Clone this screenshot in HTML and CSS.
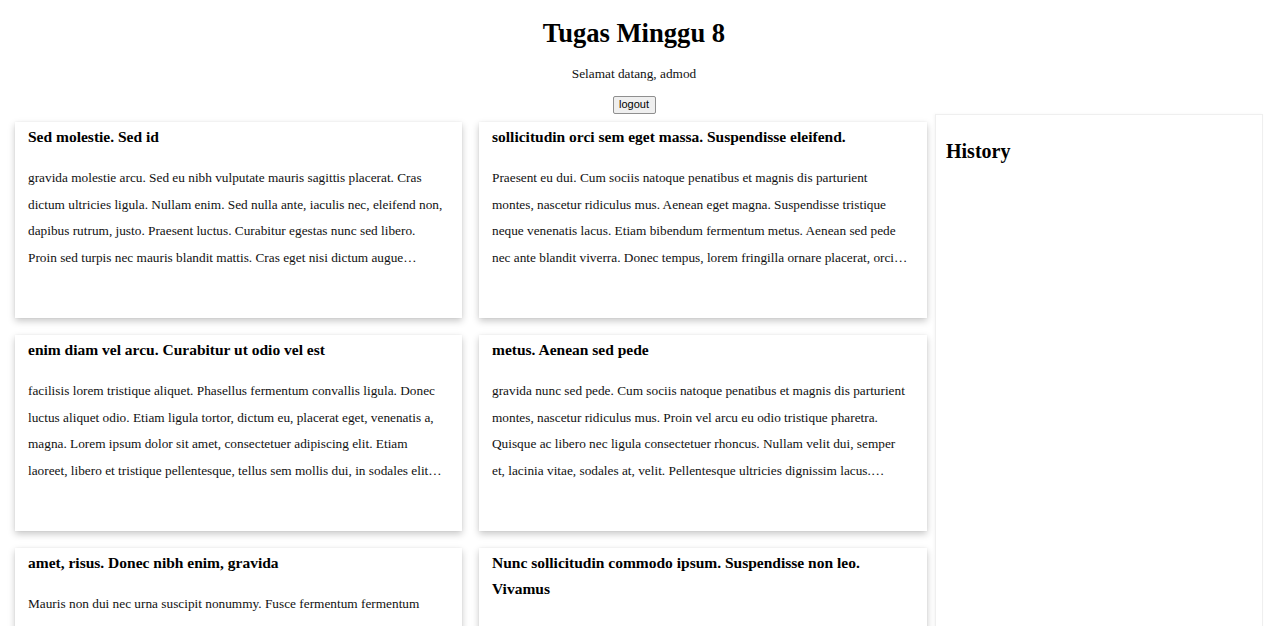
FILE: index.html
```html
<!DOCTYPE html>
<html lang="id">
<head>
<meta charset="utf-8">
<title>Tugas Minggu 8</title>
<link rel="stylesheet" href="styles.css">
</head>
<body>
<header class="header">
  <h1 class="title">Tugas Minggu 8</h1>
  <p class="welcome">Selamat datang, admod</p>
  <button class="logout" type="button">logout</button>
</header>
<main class="main">
  <section class="cards">
    <article class="card">
      <h3 class="card-title">Sed molestie. Sed id</h3>
      <p class="card-body">gravida molestie arcu. Sed eu nibh vulputate mauris sagittis placerat. Cras dictum ultricies ligula. Nullam enim. Sed nulla ante, iaculis nec, eleifend non, dapibus rutrum, justo. Praesent luctus. Curabitur egestas nunc sed libero. Proin sed turpis nec mauris blandit mattis. Cras eget nisi dictum augue malesuada malesuada. Integer id magna et ipsum cursus vestibulum.</p>
    </article>
    <article class="card">
      <h3 class="card-title">sollicitudin orci sem eget massa. Suspendisse eleifend.</h3>
      <p class="card-body">Praesent eu dui. Cum sociis natoque penatibus et magnis dis parturient montes, nascetur ridiculus mus. Aenean eget magna. Suspendisse tristique neque venenatis lacus. Etiam bibendum fermentum metus. Aenean sed pede nec ante blandit viverra. Donec tempus, lorem fringilla ornare placerat, orci lacus vestibulum lorem, sit amet ultricies sem magna nec quam.</p>
    </article>
    <article class="card">
      <h3 class="card-title">enim diam vel arcu. Curabitur ut odio vel est</h3>
      <p class="card-body">facilisis lorem tristique aliquet. Phasellus fermentum convallis ligula. Donec luctus aliquet odio. Etiam ligula tortor, dictum eu, placerat eget, venenatis a, magna. Lorem ipsum dolor sit amet, consectetuer adipiscing elit. Etiam laoreet, libero et tristique pellentesque, tellus sem mollis dui, in sodales elit erat vitae risus. Duis a mi fringilla mi lacinia mattis.</p>
    </article>
    <article class="card">
      <h3 class="card-title">metus. Aenean sed pede</h3>
      <p class="card-body">gravida nunc sed pede. Cum sociis natoque penatibus et magnis dis parturient montes, nascetur ridiculus mus. Proin vel arcu eu odio tristique pharetra. Quisque ac libero nec ligula consectetuer rhoncus. Nullam velit dui, semper et, lacinia vitae, sodales at, velit. Pellentesque ultricies dignissim lacus. Aliquam rutrum lorem ac risus.</p>
    </article>
    <article class="card">
      <h3 class="card-title">amet, risus. Donec nibh enim, gravida</h3>
      <p class="card-body">Mauris non dui nec urna suscipit nonummy. Fusce fermentum fermentum arcu. Vestibulum ante ipsum primis in faucibus orci luctus et ultrices posuere cubilia Curae; Phasellus ornare. Fusce mollis. Duis sit amet diam eu dolor egestas rhoncus. Proin nisl sem, consequat nec, mollis vitae, posuere at, velit.</p>
    </article>
    <article class="card">
      <h3 class="card-title">Nunc sollicitudin commodo ipsum. Suspendisse non leo. Vivamus</h3>
      <p class="card-body">nibh dolor, nonummy ac, feugiat non, lobortis quis, pede. Suspendisse dui. Fusce diam nunc, ullamcorper eu, euismod ac, fermentum vel, mauris. Integer sapien ipsum, blandit ac, aliquam et, iaculis sed, libero.</p>
    </article>
  </section>
  <aside class="history">
    <h2 class="history-title">History</h2>
  </aside>
</main>
</body>
</html>
```

FILE: styles.css
```css
html, body {
  margin: 0;
  padding: 0;
  background: #ffffff;
}

body {
  font-family: "Liberation Serif", "Times New Roman", serif;
  font-size: 13.3px;
  line-height: 26.6px;
  color: #111111;
}

.header {
  display: flex;
  flex-direction: column;
  align-items: center;
  padding-top: 18px;
}

.title {
  margin: 0;
  font-size: 26.6px;
  line-height: 30px;
  font-weight: bold;
  color: #000000;
}

.welcome {
  margin: 13px 0 0;
}

.logout {
  margin-top: 8px;
  font-family: "Liberation Sans", Arial, sans-serif;
  font-size: 11px;
  line-height: 13px;
  color: #000000;
  background: #efefef;
  border: 1px solid #8f8f8f;
  border-radius: 2px;
  padding: 1px 5px 2px;
  width: 43px;
  height: 18px;
}

.main {
  display: flex;
  align-items: flex-start;
  padding: 0 5px 0 15px;
}

.cards {
  display: grid;
  grid-template-columns: 447px 448px;
  column-gap: 17px;
  row-gap: 17px;
  padding-top: 8px;
}

.card {
  height: 196px;
  box-sizing: border-box;
  padding: 2px 17px 0 13px;
  background: #ffffff;
  box-shadow: 0 3px 7px rgba(0, 0, 0, 0.22), 0 0 2px rgba(0, 0, 0, 0.05);
}

.card-title {
  margin: 0 0 15px;
  font-size: 15.5px;
  line-height: 26.6px;
  font-weight: bold;
  color: #000000;
}

.card-body {
  margin: 0;
  display: -webkit-box;
  -webkit-box-orient: vertical;
  -webkit-line-clamp: 4;
  overflow: hidden;
}

.history {
  margin-left: 8px;
  flex: 1;
  height: 600px;
  box-sizing: border-box;
  border: 1px solid #efefef;
  box-shadow: -1px 0 3px rgba(0, 0, 0, 0.04);
  padding: 23px 10px 10px;
}

.history-title {
  margin: 0;
  font-size: 20px;
  line-height: 26px;
  font-weight: bold;
  color: #000000;
}
```
